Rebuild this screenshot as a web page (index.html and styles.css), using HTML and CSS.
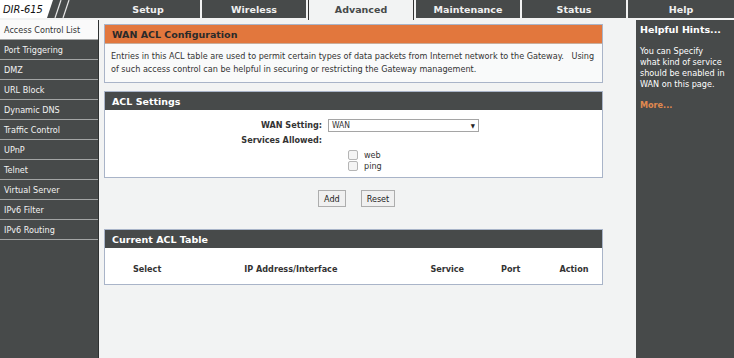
FILE: index.html
```html
<!DOCTYPE html>
<html>
<head>
<meta charset="utf-8">
<link rel="stylesheet" href="styles.css">
</head>
<body>
<div class="page">
  <header class="top">
    <div class="logo">
      <span class="model">DIR-615</span>
      <svg class="stripes" width="53" height="18" viewBox="0 0 53 18">
        <polygon points="1,18 7,0 53,0 53,18" fill="#474a4a"/>
        <line x1="9" y1="18" x2="15" y2="0" stroke="#e8e8e8" stroke-width="1.2"/>
        <line x1="17" y1="18" x2="23" y2="0" stroke="#e8e8e8" stroke-width="1.2"/>
      </svg>
    </div>
    <nav class="tabs">
      <div class="tab">Setup</div>
      <div class="tab">Wireless</div>
      <div class="tab active">Advanced</div>
      <div class="tab">Maintenance</div>
      <div class="tab">Status</div>
      <div class="tab help">Help</div>
    </nav>
  </header>
  <div class="main">
    <aside class="side">
      <div class="item active">Access Control List</div>
      <div class="item">Port Triggering</div>
      <div class="item">DMZ</div>
      <div class="item">URL Block</div>
      <div class="item">Dynamic DNS</div>
      <div class="item">Traffic Control</div>
      <div class="item">UPnP</div>
      <div class="item">Telnet</div>
      <div class="item">Virtual Server</div>
      <div class="item">IPv6 Filter</div>
      <div class="item">IPv6 Routing</div>
    </aside>
    <section class="content">
      <div class="box">
        <div class="box-head orange">WAN ACL Configuration</div>
        <div class="box-body intro">Entries in this ACL table are used to permit certain types of data packets from Internet network to the Gateway.&nbsp;&nbsp; Using of such access control can be helpful in securing or restricting the Gateway management.</div>
      </div>
      <div class="box settings">
        <div class="box-head">ACL Settings</div>
        <div class="box-body form">
          <div class="row">
            <span class="label">WAN Setting:</span>
            <div class="select"><span>WAN</span><span class="arrow">▼</span></div>
          </div>
          <div class="row">
            <span class="label">Services Allowed:</span>
          </div>
          <div class="checks">
            <label class="check"><span class="cb"></span>web</label>
            <label class="check"><span class="cb"></span>ping</label>
          </div>
        </div>
      </div>
      <div class="buttons">
        <button class="btn">Add</button>
        <button class="btn">Reset</button>
      </div>
      <div class="box table">
        <div class="box-head">Current ACL Table</div>
        <div class="box-body cols">
          <span class="c1">Select</span>
          <span class="c2">IP Address/Interface</span>
          <span class="c3">Service</span>
          <span class="c4">Port</span>
          <span class="c5">Action</span>
        </div>
      </div>
    </section>
    <aside class="hints">
      <div class="hints-title">Helpful Hints...</div>
      <p class="hints-text">You can Specify<br>what kind of service<br>should be enabled in<br>WAN on this page.</p>
      <div class="more">More...</div>
    </aside>
  </div>
</div>
</body>
</html>
```

FILE: styles.css
```css
html, body {
  margin: 0;
  padding: 0;
}
body {
  width: 734px;
  height: 358px;
  overflow: hidden;
  background: #f2f3f3;
  font-family: "DejaVu Sans", Verdana, sans-serif;
  font-stretch: condensed;
  font-size: 9px;
  color: #333;
}
.page {
  display: flex;
  flex-direction: column;
  height: 358px;
}
.top {
  display: flex;
  height: 20px;
  background: #f2f3f3;
}
.logo {
  width: 96px;
  height: 18px;
  display: flex;
  align-items: center;
  background: #fff;
  overflow: hidden;
}
.model {
  font-family: "DejaVu Sans", sans-serif;
  font-stretch: condensed;
  font-style: italic;
  font-size: 11px;
  color: #111;
  padding-left: 3px;
  white-space: nowrap;
  width: 40px;
  flex: 0 0 40px;
}
.stripes {
  display: block;
  flex: 0 0 53px;
  margin-left: 3px;
}
.tabs {
  flex: 1;
  display: flex;
  gap: 2px;
}
.tab {
  flex: 1;
  height: 18px;
  background: #474a4a;
  color: #f0f0f0;
  font-weight: bold;
  font-stretch: normal;
  font-size: 9.5px;
  display: flex;
  align-items: center;
  justify-content: center;
  padding-top: 1px;
  box-sizing: border-box;
}
.tab.active {
  background: #f2f3f3;
  color: #474a4a;
  height: 20px;
  border-left: 1px solid #333;
  border-right: 1px solid #333;
  padding-bottom: 2px;
}
.tab.help {
  flex: 0 0 106px;
}
.main {
  flex: 1;
  display: flex;
}
.side {
  width: 98px;
  background: #474a4a;
  border-right: 1px solid #2f3232;
}
.item {
  height: 19px;
  border-bottom: 1.3px solid #a3a5a5;
  color: #f2f2f2;
  display: flex;
  align-items: center;
  padding-left: 4px;
  font-size: 9px;
}
.item.active {
  background: #fafafa;
  color: #333;
}
.content {
  flex: 1;
  padding: 4px 0 0 5px;
  display: flex;
  flex-direction: column;
}
.box {
  width: 497px;
  border: 1px solid #a9b4c8;
  background: #f9fafa;
}
.box-head {
  height: 18px;
  background: #474a4a;
  color: #fff;
  font-weight: bold;
  font-stretch: normal;
  font-size: 9.5px;
  display: flex;
  align-items: center;
  padding-left: 7px;
}
.box-head.orange {
  background: #e2773d;
  color: #2a2a2a;
  border-bottom: 1px solid #c9ad9a;
}
.intro {
  padding: 6px 3px 6px 6px;
  line-height: 13px;
  color: #333;
}
.settings {
  margin-top: 8px;
  background: #fff;
}
.form {
  padding: 9px 0 6px 0;
}
.row {
  display: flex;
  align-items: center;
  height: 12px;
  margin-bottom: 3px;
}
.label {
  width: 217px;
  text-align: right;
  font-weight: bold;
  font-size: 9px;
  color: #333;
}
.select {
  margin-left: 6px;
  width: 143px;
  height: 11px;
  border: 1px solid #a5a5a5;
  background: #fff;
  display: flex;
  align-items: center;
  justify-content: space-between;
  padding: 0 3px;
  box-sizing: content-box;
  font-size: 8.5px;
}
.arrow {
  font-size: 6px;
  color: #222;
}
.checks {
  display: flex;
  flex-direction: column;
  padding-left: 243px;
}
.check {
  display: flex;
  align-items: center;
  height: 11px;
  font-size: 9px;
  color: #333;
}
.cb {
  width: 8px;
  height: 8px;
  border: 1px solid #b5b5b5;
  border-radius: 2px;
  background: #f4f4f4;
  margin-right: 6px;
}
.buttons {
  display: flex;
  gap: 15px;
  margin-top: 12px;
  padding-left: 214px;
}
.btn {
  height: 17px;
  padding: 0 5px;
  border: 1px solid #adadad;
  background: #f0f0f0;
  font-family: "DejaVu Sans", sans-serif;
  font-stretch: condensed;
  font-size: 9px;
  color: #222;
}
.table {
  margin-top: 22px;
  background: #fff;
}
.cols {
  display: flex;
  height: 36px;
  box-sizing: border-box;
  padding-top: 16px;
  align-items: flex-start;
  font-weight: bold;
  font-size: 9px;
  color: #333;
}
.cols span {
  display: block;
}
.c1 { margin-left: 28px; }
.c2 { margin-left: 83px; }
.c3 { margin-left: 93px; }
.c4 { margin-left: 37px; }
.c5 { margin-left: 39px; }
.hints {
  width: 94px;
  background: #474a4a;
  color: #fff;
  padding: 4px 0 0 4px;
}
.hints-title {
  font-weight: bold;
  font-size: 9.5px;
  font-stretch: normal;
}
.hints-text {
  margin: 11px 0 10px 0;
  font-size: 9px;
  line-height: 11px;
  white-space: nowrap;
}
.more {
  color: #e0894f;
  font-weight: bold;
  font-size: 9px;
}
```
